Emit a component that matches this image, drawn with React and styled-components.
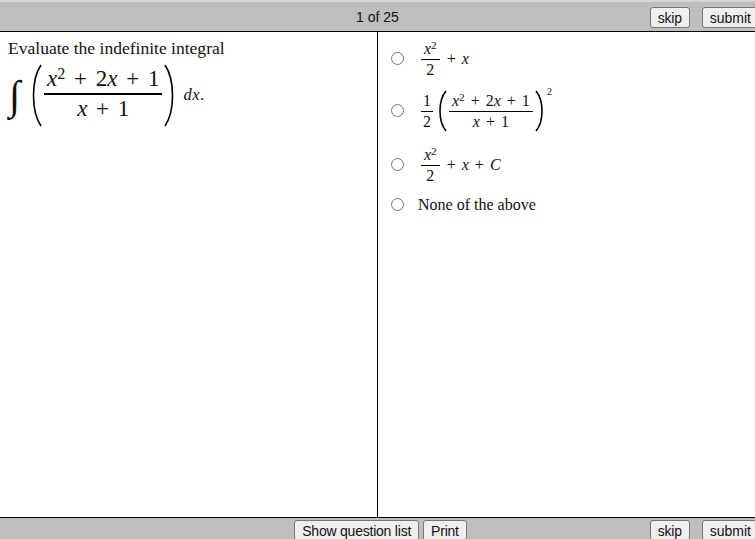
import React from 'react'
import styled, { createGlobalStyle } from 'styled-components'

const Global = createGlobalStyle`
  html, body { margin: 0; padding: 0; height: 100%; overflow: hidden; background: #fff; }
  #root { height: 100%; }
`

const Page = styled.div`
  height: 539px;
  width: 755px;
  display: grid;
  grid-template-rows: 32px 1fr 22px;
  font-family: "Liberation Serif", "Times New Roman", serif;
  color: #111;
  overflow: hidden;
`

const Bar = styled.div`
  display: grid;
  grid-template-columns: 1fr auto 1fr;
  background: #bebebe;
  font: 14px "Liberation Sans", Arial, sans-serif;
  ${p => p.$top
    ? 'border-top: 2px solid #d6d6d6; border-bottom: 1px solid #000; padding-top: 5px; align-items: start;'
    : 'border-top: 1px solid #000; padding-top: 2px; padding-left: 6px; align-items: start;'}
`

const Counter = styled.div`
  line-height: 20px;
`

const Group = styled.div`
  display: flex;
  gap: ${p => p.$gap}px;
  justify-content: ${p => p.$end ? 'flex-end' : 'flex-start'};
  margin-right: ${p => p.$end ? '-4px' : '0'};
`

const Btn = styled.button`
  height: 21px;
  padding: 0 7px;
  flex: none;
  font: 14px "Liberation Sans", Arial, sans-serif;
  letter-spacing: ${p => p.$tight ? '-0.22px' : '0'};
  color: #111;
  background: #efefef;
  border: 1px solid #767676;
  border-radius: 3px;
`

const Main = styled.div`
  display: grid;
  grid-template-columns: 378px 1fr;
  min-height: 0;
`

const Left = styled.div`
  border-right: 1px solid #000;
  padding: 6px 8px;
  font-size: 17.55px;
`

const Prompt = styled.div`
  line-height: 21px;
`

const Math = styled.div`
  display: flex;
  align-items: center;
  margin-top: 5px;
  font-size: 23px;
  word-spacing: 3px;
  line-height: 1.1;
`

const Var = styled.i`
  font-family: "Liberation Serif", serif;
`

const Frac = styled.span`
  display: inline-flex;
  flex-direction: column;
  align-items: stretch;
  text-align: center;
  white-space: nowrap;
  margin: 0 ${p => p.$gap || 0}px 0 ${p => p.$before ?? p.$gap ?? 0}px;
`

const Num = styled.span`
  display: block;
  padding: 0 ${p => p.$pad || 2}px 1px;
  border-bottom: ${p => p.$line || 1}px solid #000;
`

const Den = styled.span`
  display: block;
  padding: 1px 2px ${p => p.$lift || 0}px;
`

const Sup = styled.sup`
  font-size: 0.7em;
  line-height: 0;
  vertical-align: 0.45em;
`

const Integral = styled.span`
  font: italic 41px "Liberation Serif", serif;
  width: 22px;
  flex: none;
  padding-left: 1px;
  padding-bottom: 2px;
`

const Paren = styled.svg`
  flex: none;
  display: block;
`

const Dx = styled.span`
  font-size: 16.5px;
  margin-left: 8px;
  letter-spacing: 0.5px;
`

const Right = styled.div`
  padding: 4px 0 0 13px;
  display: flex;
  flex-direction: column;
`

const Option = styled.label`
  display: flex;
  align-items: center;
  gap: 14px;
  height: ${p => p.$h}px;
  font-size: 16px;
`

const Radio = styled.input`
  width: 13px;
  height: 13px;
  margin: 0;
  flex: none;
  position: relative;
  top: -1px;
`

const Expr = styled.span`
  display: flex;
  align-items: center;
  margin-left: 3px;
  font-size: 16px;
  word-spacing: 2px;
  line-height: 1.1;
`

const Rest = styled.span`
  margin-left: 7px;
  white-space: nowrap;
`

const Outer = styled.sup`
  font-size: 10px;
  align-self: flex-start;
  line-height: 1;
  margin: -3px 0 0 3px;
`

function Bracket({ flip, h, w }) {
  const d = flip
    ? `M1 1 C${w} ${h * 0.25} ${w} ${h * 0.75} 1 ${h - 1}`
    : `M${w - 1} 1 C0 ${h * 0.25} 0 ${h * 0.75} ${w - 1} ${h - 1}`
  return (
    <Paren width={w} height={h} viewBox={`0 0 ${w} ${h}`}>
      <path d={d} fill="none" stroke="#000" strokeWidth="1.6" />
    </Paren>
  )
}

function XSquared() {
  return <Frac><Num $pad={3}><Var>x</Var><Sup>2</Sup></Num><Den>2</Den></Frac>
}

export default function App() {
  return (
    <Page>
      <Global />
      <Bar $top>
        <span />
        <Counter>1 of 25</Counter>
        <Group $end $gap={12}>
          <Btn $tight>skip</Btn>
          <Btn>submit</Btn>
        </Group>
      </Bar>
      <Main>
        <Left>
          <Prompt>Evaluate the indefinite integral</Prompt>
          <Math>
            <Integral>∫</Integral>
            <Bracket h={63} w={11} />
            <Frac $gap={2}>
              <Num $pad={3} $line={2}><Var>x</Var><Sup>2</Sup> + 2<Var>x</Var> + 1</Num>
              <Den $lift={4}><Var>x</Var> + 1</Den>
            </Frac>
            <Bracket flip h={63} w={11} />
            <Dx><Var>dx</Var>.</Dx>
          </Math>
        </Left>
        <Right>
          <Option $h={46}>
            <Radio type="radio" name="a" />
            <Expr><XSquared /><Rest>+ <Var>x</Var></Rest></Expr>
          </Option>
          <Option $h={58}>
            <Radio type="radio" name="a" />
            <Expr>
              <Frac $before={0} $gap={5}><Num>1</Num><Den>2</Den></Frac>
              <Bracket h={42} w={9} />
              <Frac $gap={2}>
                <Num $pad={3}><Var>x</Var><Sup>2</Sup> + 2<Var>x</Var> + 1</Num>
                <Den><Var>x</Var> + 1</Den>
              </Frac>
              <Bracket flip h={42} w={9} />
              <Outer>2</Outer>
            </Expr>
          </Option>
          <Option $h={50}>
            <Radio type="radio" name="a" />
            <Expr><XSquared /><Rest>+ <Var>x</Var> + <Var>C</Var></Rest></Expr>
          </Option>
          <Option $h={30}>
            <Radio type="radio" name="a" />
            <span>None of the above</span>
          </Option>
        </Right>
      </Main>
      <Bar>
        <span />
        <Group $gap={4}>
          <Btn $tight>Show question list</Btn>
          <Btn $tight>Print</Btn>
        </Group>
        <Group $end $gap={12}>
          <Btn $tight>skip</Btn>
          <Btn>submit</Btn>
        </Group>
      </Bar>
    </Page>
  )
}
